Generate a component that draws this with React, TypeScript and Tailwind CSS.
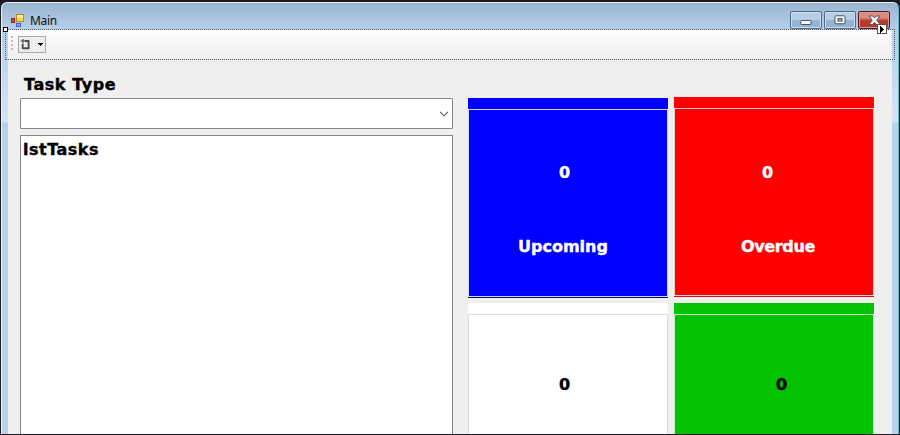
type TileProps = {
  strip: string;
  body: string;
  edge: string;
  base: string;
  count: string;
  countPad: string;
  label?: string;
  labelPad?: string;
};

function Tile({ strip, body, edge, base, count, countPad, label, labelPad }: TileProps) {
  return (
    <div className="w-[200px] shrink-0">
      <div className={`h-[11px] ${strip}`} />
      <div className={`h-[188px] border [-webkit-text-stroke:0.4px_currentColor] ${edge} ${body}`}>
        <div className={`h-5 text-[16px] leading-5 ${countPad}`}>{count}</div>
        {label && <div className={`mt-[54px] text-[16px] leading-5 ${labelPad}`}>{label}</div>}
      </div>
      <div className={`h-px ${base}`} />
    </div>
  );
}

function AppIcon() {
  return (
    <svg width="14" height="15" viewBox="0 0 14 15" shapeRendering="crispEdges">
      <rect x="5.5" y="1.5" width="7" height="7" fill="#fcd648" stroke="#b58a28" />
      <rect x="6" y="2" width="6" height="3" fill="#ffe98d" />
      <rect x="0.5" y="5.5" width="3" height="4" fill="#d84a32" stroke="#9e2218" />
      <rect x="5.5" y="10.5" width="4" height="3" fill="#75a9f5" stroke="#3867c5" />
    </svg>
  );
}

function CaptionButtons() {
  const glass =
    "flex h-[18px] items-center justify-center rounded-[2px] border border-[#4d6988] bg-gradient-to-b from-[#b9cee6] from-45% to-[#96b3d4] to-55% shadow-[inset_0_0_0_1px_#cddff1]";
  return (
    <div className="flex gap-[2px]">
      <div className={`w-8 ${glass}`}>
        <svg width="12" height="7" viewBox="0 0 12 7" className="mt-1">
          <rect x="0.8" y="1.5" width="10.2" height="4" rx="0.8" fill="#f7f7f7" stroke="#4b5665" />
        </svg>
      </div>
      <div className={`w-8 ${glass}`}>
        <svg width="12" height="10" viewBox="0 0 12 10">
          <rect x="1" y="0.8" width="10" height="8" rx="0.8" fill="#f7f7f7" stroke="#4b5665" />
          <rect x="4" y="3.6" width="4" height="2.4" fill="#9cb8d8" stroke="#4b5665" />
        </svg>
      </div>
      <div className="flex h-[18px] w-8 items-center justify-center rounded-[2px] border border-[#521820] bg-gradient-to-b from-[#d98b80] from-35% to-[#b73a28] to-55% shadow-[inset_0_0_0_1px_#dc9a90]">
        <svg width="13" height="11" viewBox="0 0 13 11">
          <path
            d="M1 1h3.7l1.8 2 1.8-2H12L8.8 5.2 12 9.5H8.3l-1.8-2.1-1.8 2.1H1l3.2-4.3z"
            fill="#f8f8f8"
            stroke="#565363"
          />
        </svg>
      </div>
    </div>
  );
}

function ToolStrip() {
  return (
    <div className="flex h-[30px] border-b border-[#eeeeee] bg-gradient-to-b from-[#fdfdfd] to-[#efefef] pt-[5px] pl-[3px]">
      <div className="flex w-[2px] flex-col gap-[2px] pt-px">
        {[0, 1, 2, 3].map((n) => (
          <span key={n} className="h-[2px] w-[2px] bg-[#bebebe]" />
        ))}
      </div>
      <div className="mt-px ml-[5px] flex h-[17px] w-7 border border-[#a8a8a8] bg-[#ededed]">
        <div className="w-4 border-r border-[#f9f9f9]">
          <svg width="15" height="15" viewBox="0 0 15 15">
            <path d="M6 4h3.6v7.2H3.7V7" fill="none" stroke="#4c4c4c" strokeWidth="1.9" strokeLinejoin="round" />
            <path d="M1.8 3.9h4.7M4 2v4.5" stroke="#555" strokeWidth="1.2" />
          </svg>
        </div>
        <svg width="10" height="15" viewBox="0 0 10 15" shapeRendering="crispEdges">
          <path d="M3 6h5L5.5 9z" fill="#000" />
        </svg>
      </div>
    </div>
  );
}

export default function App() {
  return (
    <div className="relative h-[435px] w-[900px] overflow-hidden bg-[#1d1b21] pt-[2px] pl-px font-['DejaVu_Sans',Verdana,sans-serif] font-bold">
      <div className="h-[432px] w-[898px] overflow-hidden rounded-t-[6px] border-t border-r border-l border-t-[#e5eef7] border-r-[#5bb8df] border-l-[#eaf3fb] bg-gradient-to-b from-[#9ab4d0] from-0% via-[#b9d1ea] via-[28px] to-[#b9d1ea]">
        <header className="flex h-[27px] justify-between pr-2 pl-[9px]">
          <div className="flex items-center gap-[5px] pt-[7px]">
            <AppIcon />
            <span className="mt-px font-['Noto_Sans','Open_Sans',sans-serif] text-[12px] leading-4 font-normal tracking-[-0.3px] text-[#111]">
              Main
            </span>
          </div>
          <div className="pt-2">
            <CaptionButtons />
          </div>
        </header>
        <div className="flex h-[404px] bg-[linear-gradient(to_bottom,#b7cfe8_0px,#d5e4f4_92px,#b9d1ea_93px)] px-[6px]">
          <main className="w-[884px] overflow-hidden bg-[#efefef]">
            <ToolStrip />
            <div className="flex pl-3">
              <section className="w-[433px] shrink-0">
                <h1 className="mt-[15px] h-[23px] pl-1 text-[16px] leading-5 tracking-[0.55px] text-black [-webkit-text-stroke:0.4px_currentColor]">
                  Task Type
                </h1>
                <div className="flex h-[31px] items-center justify-end rounded-[1px] border border-[#858688] bg-white pr-[3px]">
                  <svg width="10" height="6" viewBox="0 0 10 6">
                    <path d="M1 .8l4 4 4-4" fill="none" stroke="#555" strokeWidth="1.1" />
                  </svg>
                </div>
                <div className="mt-[6px] h-[310px] border border-[#808387] bg-white pt-1 pl-[2px] text-[16px] leading-5 tracking-[0.5px] text-black [-webkit-text-stroke:0.4px_currentColor]">
                  lstTasks
                </div>
              </section>
              <section className="ml-[15px] flex gap-[6px] pt-[37px]">
                <div className="flex flex-col gap-[5px] pt-px">
                  <Tile
                    strip="bg-[#0000ff]"
                    body="bg-[#0000ff] pt-[53px] text-white"
                    edge="border-[#d9d9e9]"
                    base="bg-[#000080]"
                    count="0"
                    countPad="pl-[90px]"
                    label="Upcoming"
                    labelPad="pl-[49px]"
                  />
                  <Tile
                    strip="bg-white"
                    body="bg-white pt-[60px] text-black"
                    edge="border-[#d9d9d9]"
                    base="bg-white"
                    count="0"
                    countPad="pl-[90px]"
                  />
                </div>
                <div className="flex flex-col gap-[6px]">
                  <Tile
                    strip="bg-[#ff0000]"
                    body="bg-[#ff0000] pt-[54px] text-white"
                    edge="border-[#efcaca]"
                    base="bg-[#cf1018]"
                    count="0"
                    countPad="pl-[87px]"
                    label="Overdue"
                    labelPad="pl-[66px] tracking-[-0.35px]"
                  />
                  <Tile
                    strip="bg-[#04c200]"
                    body="bg-[#04c200] pt-[60px] text-black"
                    edge="border-[#c8edc8]"
                    base="bg-[#047a00]"
                    count="0"
                    countPad="pl-[101px]"
                  />
                </div>
              </section>
            </div>
          </main>
        </div>
      </div>
      <div className="absolute top-[29px] left-[5px] h-[31px] w-[890px] border border-dotted border-[#555b63]" />
      <div className="absolute top-[27px] left-[3px] h-[5px] w-[5px] border border-black bg-white" />
      <div className="absolute top-6 left-[877px] flex h-[10px] w-[10px] items-center justify-center border border-[#555] bg-white">
        <svg width="4" height="7" viewBox="0 0 4 7" shapeRendering="crispEdges">
          <path d="M0 0l4 3.5L0 7z" fill="#000" />
        </svg>
      </div>
    </div>
  );
}
